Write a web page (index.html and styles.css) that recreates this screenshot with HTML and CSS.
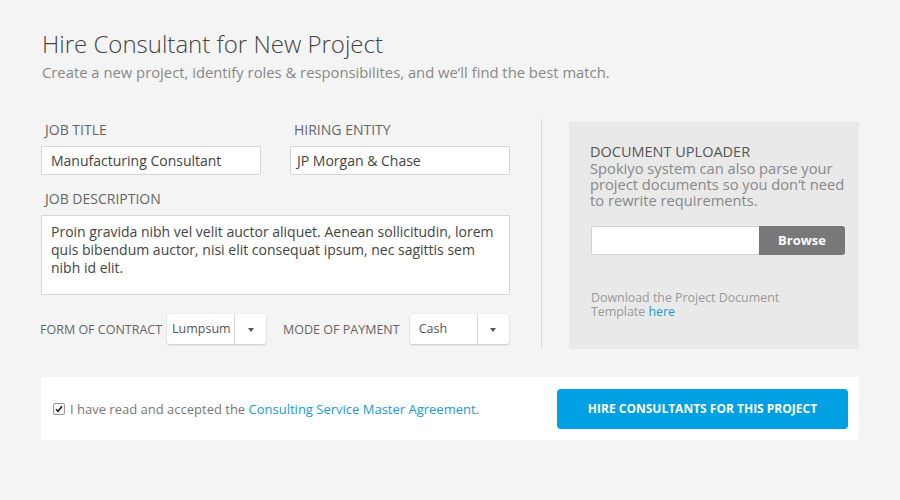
FILE: index.html
```html
<!DOCTYPE html>
<html lang="en">
<head>
<meta charset="utf-8">
<title>Hire Consultant for New Project</title>
<link rel="stylesheet" href="styles.css">
</head>
<body>
<div class="page">
  <header class="head">
    <h1 class="title">Hire Consultant for New Project</h1>
    <p class="subtitle">Create a new project, identify roles &amp; responsibilites, and we’ll find the best match.</p>
  </header>

  <div class="main">
    <form class="form">
      <div class="pair">
        <div class="field">
          <label class="label">JOB TITLE</label>
          <div class="input">Manufacturing Consultant</div>
        </div>
        <div class="field">
          <label class="label">HIRING ENTITY</label>
          <div class="input">JP Morgan &amp; Chase</div>
        </div>
      </div>
      <div class="field field-desc">
        <label class="label">JOB DESCRIPTION</label>
        <div class="textarea">Proin gravida nibh vel velit auctor aliquet. Aenean sollicitudin, lorem quis bibendum auctor, nisi elit consequat ipsum, nec sagittis sem nibh id elit.</div>
      </div>
      <div class="selects">
        <span class="sel-label">FORM OF CONTRACT</span>
        <div class="select">
          <span class="sel-value sel-value-a">Lumpsum</span>
          <span class="sel-arrow"><span class="caret"></span></span>
        </div>
        <span class="sel-label sel-label-b">MODE OF PAYMENT</span>
        <div class="select">
          <span class="sel-value sel-value-b">Cash</span>
          <span class="sel-arrow"><span class="caret"></span></span>
        </div>
      </div>
    </form>

    <div class="divider"></div>

    <aside class="uploader">
      <h2 class="up-title">DOCUMENT UPLOADER</h2>
      <p class="up-text">Spokiyo system can also parse your project documents so you don’t need to rewrite requirements.</p>
      <div class="file">
        <span class="file-field"></span>
        <span class="file-btn">Browse</span>
      </div>
      <p class="up-note">Download the Project Document Template <a class="link" href="#">here</a></p>
    </aside>
  </div>

  <div class="footer">
    <label class="agree">
      <span class="check"><svg width="8" height="8" viewBox="0 0 8 8"><path d="M1 4.2 L3 6.3 L7 1.2" fill="none" stroke="#222" stroke-width="1.6"/></svg></span>
      <span>I have read and accepted the <a class="link" href="#">Consulting Service Master Agreement</a>.</span>
    </label>
    <button class="cta" type="button">HIRE CONSULTANTS FOR THIS PROJECT</button>
  </div>
</div>
</body>
</html>
```
FILE: styles.css
```css
* { box-sizing: border-box; }
html, body {
  margin: 0;
  padding: 0;
  background: #f4f4f4;
}
body {
  font-family: "Open Sans", "Noto Sans", "Liberation Sans", sans-serif;
  color: #555;
}
.page {
  width: 818px;
  margin-left: 41px;
  padding-top: 28px;
}
.head { padding-left: 1px; }
.title {
  margin: 0;
  font-size: 24px;
  font-weight: 300;
  line-height: 32px;
  color: #444;
}
.subtitle {
  margin: 3px 0 0;
  font-size: 14.8px;
  line-height: 19px;
  color: #888;
}
.main {
  display: flex;
  margin-top: 39px;
}
.form {
  width: 469px;
  margin: 0;
}
.pair {
  display: flex;
  gap: 29px;
}
.field {
  display: flex;
  flex-direction: column;
  width: 220px;
}
.label {
  font-size: 14px;
  line-height: 18px;
  color: #666;
  padding-left: 4px;
  margin-bottom: 7px;
}
.input {
  height: 29px;
  border: 1px solid #d6d6d6;
  background: #fff;
  padding: 0 9px;
  font-size: 14px;
  line-height: 27px;
  color: #444;
  border-radius: 1px;
}
.pair .field:last-child .input { padding-left: 6px; }
.field-desc {
  width: 469px;
  margin-top: 15px;
}
.textarea {
  height: 80px;
  border: 1px solid #d6d6d6;
  background: #fff;
  padding: 7px 9px;
  font-size: 14px;
  line-height: 18px;
  color: #444;
  border-radius: 1px;
}
.selects {
  display: flex;
  align-items: center;
  margin-top: 19px;
}
.sel-label {
  font-size: 12.5px;
  color: #666;
  margin-right: 5px;
  margin-left: -1px;
}
.sel-label-b {
  margin-left: 17px;
  margin-right: 10px;
}
.select {
  display: flex;
  width: 99px;
  height: 30px;
  background: #fff;
  border-radius: 2px;
  box-shadow: 0 0 1px rgba(0,0,0,0.18), 0 1px 2px rgba(0,0,0,0.18);
}
.sel-value {
  flex: 1;
  font-size: 12.5px;
  line-height: 30px;
  color: #555;
  border-right: 1px solid #d8d8d8;
}
.sel-value-a { padding-left: 5px; }
.sel-value-b { padding-left: 9px; }
.sel-arrow {
  width: 31px;
  display: flex;
  align-items: center;
  justify-content: center;
}
.caret {
  width: 0;
  height: 0;
  border-left: 3.5px solid transparent;
  border-right: 3.5px solid transparent;
  border-top: 4px solid #555;
  margin-top: 1px;
}
.divider {
  width: 1px;
  background: #dcdcdc;
  margin-left: 31px;
  margin-right: 27px;
  margin-top: -2px;
  height: 230px;
}
.uploader {
  width: 291px;
  height: 227px;
  background: #e9e9e9;
  padding: 21px 14px 0 21px;
  margin-top: 1px;
}
.up-title {
  margin: 0;
  font-size: 14.5px;
  font-weight: 400;
  line-height: 17px;
  color: #555;
}
.up-text {
  margin: 0;
  font-size: 14.7px;
  line-height: 16px;
  color: #888;
}
.file {
  display: flex;
  height: 29px;
  margin-top: 18px;
  padding-left: 1px;
}
.file-field {
  width: 168px;
  background: #fff;
  border: 1px solid #d2d2d2;
  border-right: none;
  border-radius: 2px 0 0 2px;
}
.file-btn {
  width: 86px;
  background: #787878;
  color: #fff;
  font-weight: 700;
  font-size: 13px;
  line-height: 29px;
  text-align: center;
  border-radius: 0 3px 3px 0;
}
.up-note {
  margin: 36px 0 0 1px;
  width: 215px;
  font-size: 12.4px;
  line-height: 14px;
  color: #999;
}
.link {
  color: #1a9ad6;
  text-decoration: none;
}
.footer {
  display: flex;
  align-items: center;
  justify-content: space-between;
  height: 63px;
  margin-top: 28px;
  background: #fff;
  padding: 0 11px 0 12px;
}
.agree {
  display: flex;
  align-items: center;
  font-size: 13px;
  color: #777;
  padding-top: 1px;
}
.check {
  width: 12px;
  height: 12px;
  border: 1px solid #999;
  border-radius: 2px;
  background: #f6f6f6;
  display: flex;
  align-items: center;
  justify-content: center;
  margin-right: 5px;
}
.cta {
  width: 291px;
  height: 40px;
  border: none;
  border-radius: 4px;
  background: #00a0e3;
  color: #fff;
  font-family: inherit;
  font-weight: 700;
  font-size: 12px;
  padding: 0;
  cursor: pointer;
}
```
